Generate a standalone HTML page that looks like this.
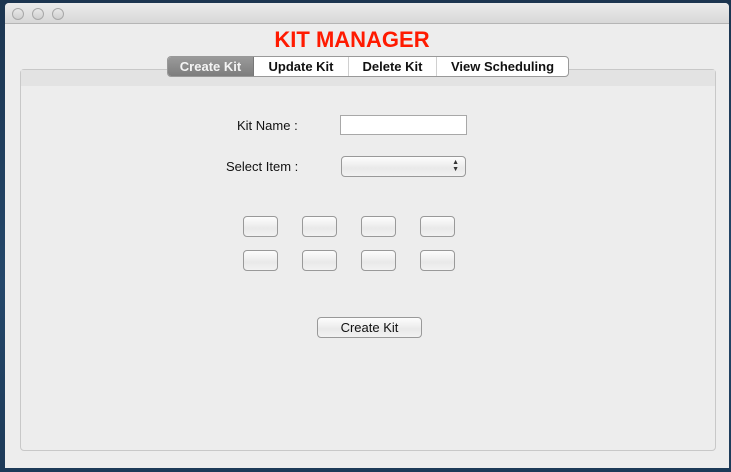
<!DOCTYPE html>
<html><head><style>
*{margin:0;padding:0;box-sizing:border-box}
body{width:731px;height:472px;overflow:hidden;background:linear-gradient(180deg,#1c3550,#24476a 60%,#1d3a58);font-family:"Liberation Sans",sans-serif;position:relative}
.win{position:absolute;left:5px;top:3px;width:724px;height:465px;background:#ededed;border-radius:4px 4px 0 0;overflow:hidden}
.tb{height:21px;background:linear-gradient(#ececec,#d8d8d8);border-bottom:1px solid #b5b5b5}
.dot{position:absolute;top:5px;width:12px;height:12px;border-radius:50%;border:1px solid #a8a8a8;background:linear-gradient(#e8e8e8,#cfcfcf)}
.title{position:absolute;left:269px;width:156px;top:24px;text-align:center;color:#ff1a00;font-size:22px;font-weight:bold;letter-spacing:0px;white-space:nowrap}
.panel{position:absolute;left:15px;top:66px;width:696px;height:382px;border:1px solid #c8c8c8;border-radius:4px;background:#ededed}
.ph{height:16px;background:#e3e3e3}
.tabs{position:absolute;left:162px;top:53px;width:402px;height:21px;border:1px solid #999;border-radius:4px;background:#fff;display:flex;font-size:13px;font-weight:bold;overflow:hidden}
.tabs div{line-height:19px;text-align:center;border-right:1px solid #d0d0d0;color:#111}
.tabs .sel{background:linear-gradient(#9a9a9a,#7d7d7d);color:#f4f4f4;border-right:1px solid #777}
.lbl{position:absolute;font-size:13px;color:#111}
.tf{position:absolute;left:335px;top:112px;width:127px;height:20px;background:#fff;border:1px solid #a8a8a8}
.btn{position:absolute;border:1px solid #999;border-radius:4px;background:linear-gradient(#fdfdfd,#e9e9e9 60%,#f2f2f2);}
</style></head><body>
<div class="win">
<div class="tb"></div>
<div class="dot" style="left:7px"></div><div class="dot" style="left:27px"></div><div class="dot" style="left:47px"></div>
<div class="title">KIT MANAGER</div>
<div class="panel"><div class="ph"></div></div>
<div class="tabs"><div class="sel" style="width:86px">Create Kit</div><div style="width:95px">Update Kit</div><div style="width:88px">Delete Kit</div><div style="width:131px;border:none">View Scheduling</div></div>
<div class="lbl" style="left:232px;top:115px">Kit Name :</div>
<div class="lbl" style="left:221px;top:156px">Select Item :</div>
<div class="tf"></div>
<div class="btn" style="left:336px;top:153px;width:125px;height:21px"><span style="position:absolute;right:6px;top:2px;font-size:7px;line-height:7px;color:#333">▲<br>▼</span></div>
<div class="btn" style="left:238px;top:213px;width:35px;height:21px"></div>
<div class="btn" style="left:297px;top:213px;width:35px;height:21px"></div>
<div class="btn" style="left:356px;top:213px;width:35px;height:21px"></div>
<div class="btn" style="left:415px;top:213px;width:35px;height:21px"></div>
<div class="btn" style="left:238px;top:247px;width:35px;height:21px"></div>
<div class="btn" style="left:297px;top:247px;width:35px;height:21px"></div>
<div class="btn" style="left:356px;top:247px;width:35px;height:21px"></div>
<div class="btn" style="left:415px;top:247px;width:35px;height:21px"></div>
<div class="btn" style="left:312px;top:314px;width:105px;height:21px;font-size:13px;text-align:center;line-height:19px;color:#111">Create Kit</div>
</div>
</body></html>
